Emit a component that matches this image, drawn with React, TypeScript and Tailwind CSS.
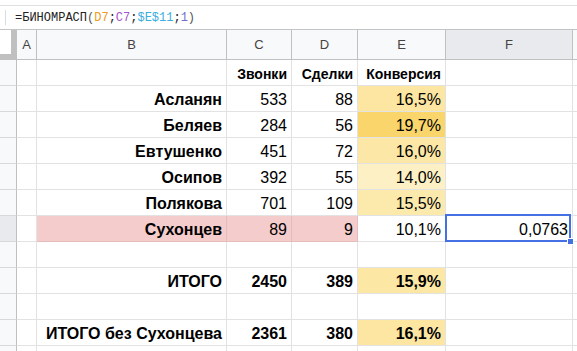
import { FC } from "react";

type Cell = {
  text?: string;
  bold?: boolean;
  small?: boolean;
  bg?: string;
};

type Row = {
  cells: Cell[];
  selected?: boolean;
};

const widths = ["w-[20px]", "w-[190px]", "w-[65px]", "w-[66px]", "w-[88px]", "w-[127px]"];
const letters = ["A", "B", "C", "D", "E", "F"];

const pink = "bg-[#f4cccc] border-[#e4bcbc]";

const rows: Row[] = [
  {
    cells: [
      {},
      {},
      { text: "Звонки", bold: true, small: true },
      { text: "Сделки", bold: true, small: true },
      { text: "Конверсия", bold: true, small: true },
      {},
    ],
  },
  { cells: [{}, { text: "Асланян", bold: true }, { text: "533" }, { text: "88" }, { text: "16,5%", bg: "bg-[#fce6a1]" }, {}] },
  { cells: [{}, { text: "Беляев", bold: true }, { text: "284" }, { text: "56" }, { text: "19,7%", bg: "bg-[#f9d56c]" }, {}] },
  { cells: [{}, { text: "Евтушенко", bold: true }, { text: "451" }, { text: "72" }, { text: "16,0%", bg: "bg-[#fce7a6]" }, {}] },
  { cells: [{}, { text: "Осипов", bold: true }, { text: "392" }, { text: "55" }, { text: "14,0%", bg: "bg-[#fdf0c4]" }, {}] },
  { cells: [{}, { text: "Полякова", bold: true }, { text: "701" }, { text: "109" }, { text: "15,5%", bg: "bg-[#fce9ac]" }, {}] },
  {
    selected: true,
    cells: [{}, { text: "Сухонцев", bold: true, bg: pink }, { text: "89", bg: pink }, { text: "9", bg: pink }, { text: "10,1%" }, { text: "0,0763" }],
  },
  { cells: [{}, {}, {}, {}, {}, {}] },
  { cells: [{}, { text: "ИТОГО", bold: true }, { text: "2450", bold: true }, { text: "389", bold: true }, { text: "15,9%", bold: true, bg: "bg-[#fce7a4]" }, {}] },
  { cells: [{}, {}, {}, {}, {}, {}] },
  { cells: [{}, { text: "ИТОГО без Сухонцева", bold: true }, { text: "2361", bold: true }, { text: "380", bold: true }, { text: "16,1%", bold: true, bg: "bg-[#fce6a2]" }, {}] },
  { cells: [{}, {}, {}, {}, {}, {}] },
];

const SheetRow: FC<{ row: Row }> = ({ row }) => (
  <div className="flex h-[26px] shrink-0">
    <div
      className={`w-[17px] shrink-0 border-r border-b border-r-[#c0c0c0] border-b-[#d9d9d9] ${
        row.selected ? "bg-[#e8eaed]" : "bg-[#f8f9fa]"
      }`}
    />
    {row.cells.map((c, i) => (
      <div
        key={i}
        className={`${widths[i]} shrink-0 flex items-end justify-end pr-[4px] pb-[3px] border-r border-b leading-4 text-black whitespace-nowrap ${
          c.small ? "text-[14px]" : "text-[16px]"
        } ${c.bg ? c.bg : "bg-white"} ${c.bg === pink ? "" : "border-[#e2e2e2]"} ${c.bold ? "font-bold" : ""}`}
      >
        {c.text}
      </div>
    ))}
    <div className="flex-1 border-b border-[#e2e2e2]" />
  </div>
);

export default function App() {
  return (
    <div className="w-[577px] h-[351px] overflow-hidden bg-white relative" style={{ fontFamily: '"Liberation Sans", Arial, sans-serif' }}>
      {/* top strip */}
      <div className="h-[6px] border-b border-[#e0e0e0]" />

      {/* formula bar */}
      <div className="h-[24px] flex items-center border-b border-[#c4c4c4]">
        <div className="w-[6px] h-[15px] border-r border-[#dadce0]" />
        <div
          className="pl-[9px] text-[12px] text-[#222] whitespace-pre"
          style={{ fontFamily: '"Liberation Mono", "Courier New", monospace' }}
        >
          =БИНОМРАСП<span className="text-[#555]">(</span>
          <span className="text-[#ed9a23]">D7</span>
          <span>;</span>
          <span className="text-[#a455cf]">C7</span>
          <span>;</span>
          <span className="text-[#3aaede]">$E$11</span>
          <span>;</span>
          <span className="text-[#6f6fc9]">1</span>
          <span className="text-[#555]">)</span>
        </div>
      </div>

      {/* column headers */}
      <div className="flex h-[30px] border-b border-[#c0c0c0]">
        <div className="w-[17px] shrink-0 bg-white border-r border-[#c0c0c0] flex">
          <div className="flex-1 flex flex-col">
            <div className="flex-1" />
            <div className="h-[5px] bg-[#c0c0c0]" />
          </div>
          <div className="w-[5px] bg-[#c0c0c0]" />
        </div>
        {letters.map((l, i) => (
          <div
            key={l}
            className={`${widths[i]} shrink-0 flex items-center justify-center border-r border-[#c0c0c0] text-[13px] text-[#444]  ${
              l === "F" ? "bg-[#e8eaed]" : "bg-[#f8f9fa]"
            }`}
          >
            {l}
          </div>
        ))}
        <div className="flex-1 bg-[#f8f9fa]" />
      </div>

      {rows.map((r, i) => (
        <SheetRow key={i} row={r} />
      ))}

      {/* selection box on F7 */}
      <div className="absolute left-[445px] top-[214px] w-[126px] h-[28px] border-2 border-[#4470e4]">
        <div className="absolute -right-[5px] -bottom-[5px] w-[7px] h-[7px] bg-[#4470e4] border border-white" />
      </div>
    </div>
  );
}
